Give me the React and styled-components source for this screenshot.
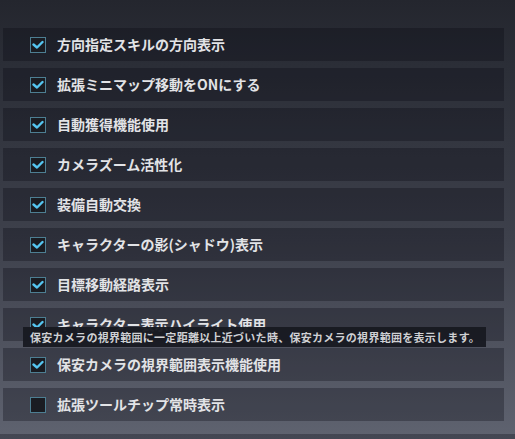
import React from 'react';
import styled, { createGlobalStyle } from 'styled-components';

const GlobalStyle = createGlobalStyle`
  html, body {
    margin: 0;
    padding: 0;
    background: #262830;
  }
  body {
    font-family: "Noto Sans CJK JP", "Noto Sans", sans-serif;
  }
`;

const Panel = styled.div`
  position: relative;
  width: 515px;
  height: 439px;
  overflow: hidden;
  background: linear-gradient(180deg, #24262e 0%, #2b2e37 15%, #3e414c 55%, #5f6370 100%);
  box-sizing: border-box;
  padding: 28px 11px 0 3px;
`;

const List = styled.div`
  display: flex;
  flex-direction: column;
  gap: 7px;
`;

const Row = styled.label`
  display: flex;
  align-items: center;
  height: 33px;
  padding-left: 27px;
  background: rgba(8, 8, 16, 0.3);
  gap: 11px;
`;

const Box = styled.span`
  width: 16px;
  height: 16px;
  box-sizing: border-box;
  border: 1px solid #4d7e92;
  background: #1a1c22;
  display: flex;
  align-items: center;
  justify-content: center;
  flex-shrink: 0;
`;

const Label = styled.span`
  font-size: 14px;
  line-height: 1;
  font-weight: 700;
  color: #e2e3e6;
  white-space: nowrap;
  position: relative;
  top: -1px;
`;

const BottomBar = styled.div`
  margin-top: 13px;
  margin-left: -3px;
  margin-right: -11px;
  height: 12px;
  background: rgba(8, 8, 16, 0.3);
`;

const Tooltip = styled.div`
  position: absolute;
  left: 23px;
  top: 327px;
  width: 463px;
  height: 20px;
  box-sizing: border-box;
  padding-left: 7px;
  background: rgba(24, 26, 33, 0.96);
  color: #cfd0d3;
  font-size: 11px;
  font-weight: 700;
  letter-spacing: 0.28px;
  line-height: 20px;
  white-space: nowrap;
`;

const Check = () => (
  <svg width="12" height="10" viewBox="0 0 12 10">
    <path d="M1.5 4.5 L5 7.5 L10.5 2" fill="none" stroke="#55c6f2" strokeWidth="2.4" strokeLinecap="round" strokeLinejoin="round" />
  </svg>
);

const options = [
  { text: '方向指定スキルの方向表示', on: true },
  { text: '拡張ミニマップ移動をONにする', on: true },
  { text: '自動獲得機能使用', on: true },
  { text: 'カメラズーム活性化', on: true },
  { text: '装備自動交換', on: true },
  { text: 'キャラクターの影(シャドウ)表示', on: true },
  { text: '目標移動経路表示', on: true },
  { text: 'キャラクター表示ハイライト使用', on: true },
  { text: '保安カメラの視界範囲表示機能使用', on: true },
  { text: '拡張ツールチップ常時表示', on: false },
];

export default function App() {
  return (
    <>
      <GlobalStyle />
      <Panel>
        <List>
          {options.map((o) => (
            <Row key={o.text}>
              <Box>{o.on && <Check />}</Box>
              <Label>{o.text}</Label>
            </Row>
          ))}
        </List>
        <BottomBar />
        <Tooltip>保安カメラの視界範囲に一定距離以上近づいた時、保安カメラの視界範囲を表示します。</Tooltip>
      </Panel>
    </>
  );
}
